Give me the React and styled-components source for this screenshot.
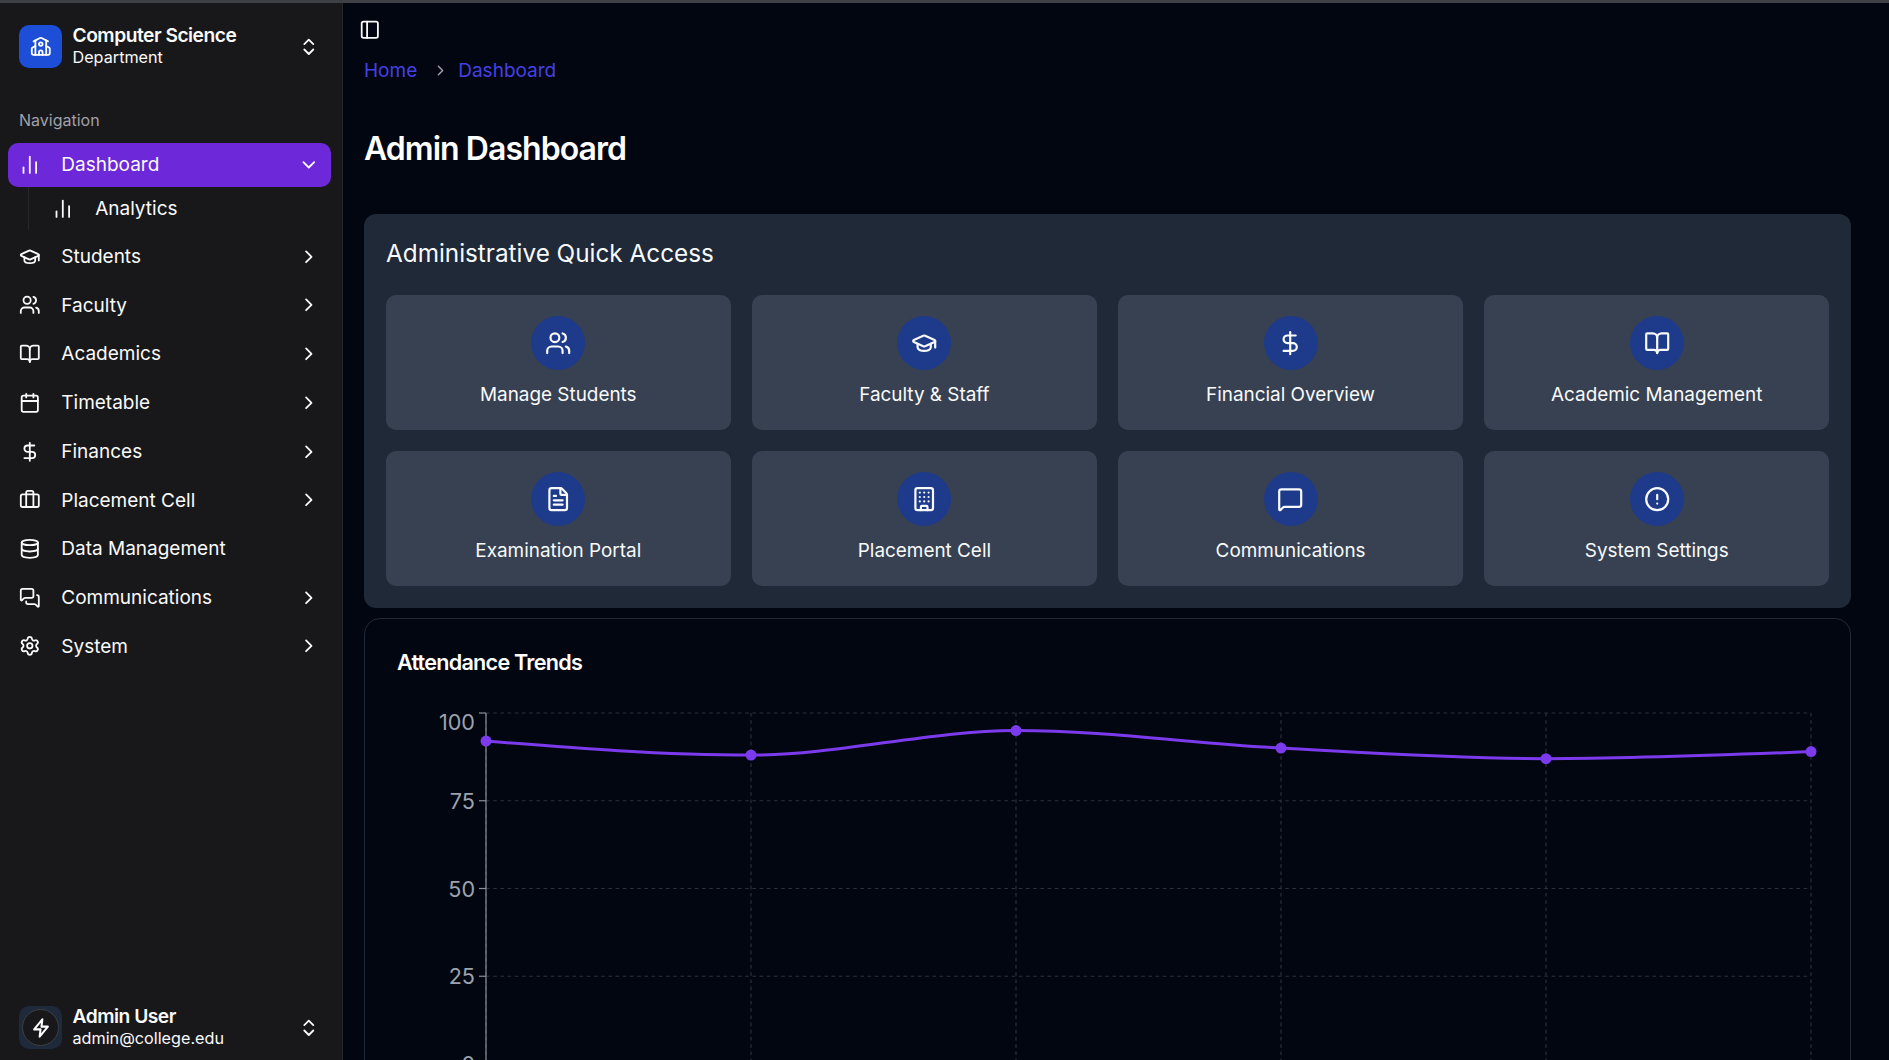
// Libraries
import React from "react";
import styled, { createGlobalStyle } from "styled-components";
import {
    BookOpen,
    Briefcase,
    Building,
    Calendar,
    ChartNoAxesColumn,
    ChevronDown,
    ChevronRight,
    ChevronsUpDown,
    CircleAlert,
    Database,
    DollarSign,
    FileText,
    GraduationCap,
    MessageSquare,
    MessagesSquare,
    PanelLeft,
    School,
    Settings,
    Users,
} from "lucide-react";

// Data
const NAV_ITEMS = [
    { label: "Students", icon: GraduationCap, more: true },
    { label: "Faculty", icon: Users, more: true },
    { label: "Academics", icon: BookOpen, more: true },
    { label: "Timetable", icon: Calendar, more: true },
    { label: "Finances", icon: DollarSign, more: true },
    { label: "Placement Cell", icon: Briefcase, more: true },
    { label: "Data Management", icon: Database },
    { label: "Communications", icon: MessagesSquare, more: true },
    { label: "System", icon: Settings, more: true },
];

const QUICK_LINKS = [
    { label: "Manage Students", icon: Users },
    { label: "Faculty & Staff", icon: GraduationCap },
    { label: "Financial Overview", icon: DollarSign },
    { label: "Academic Management", icon: BookOpen },
    { label: "Examination Portal", icon: FileText },
    { label: "Placement Cell", icon: Building },
    { label: "Communications", icon: MessageSquare },
    { label: "System Settings", icon: CircleAlert },
];

const ATTENDANCE = [92, 88, 95, 90, 87, 89];
const CHART = { left: 89, right: 1414, top: 13, bottom: 364, height: 460 };
const TICKS = [0, 25, 50, 75, 100];
const ICON = 21.6;

const xAt = (i) => CHART.left + (i * (CHART.right - CHART.left)) / (ATTENDANCE.length - 1);
const yAt = (v) => CHART.bottom - ((CHART.bottom - CHART.top) * v) / 100;

// same curve as a monotone-x line chart
const monotonePath = (pts) => {
    const h = pts.slice(1).map((p, i) => p.x - pts[i].x);
    const s = pts.slice(1).map((p, i) => (p.y - pts[i].y) / h[i]);
    const t = pts.map((p, i) => {
        if (i === 0 || i === pts.length - 1) return null;
        const sign = (Math.sign(s[i - 1]) + Math.sign(s[i])) / 2 || 0;
        const mid = (s[i - 1] * h[i] + s[i] * h[i - 1]) / (h[i - 1] + h[i]);
        return sign * Math.min(Math.abs(s[i - 1]), Math.abs(s[i]), 0.5 * Math.abs(mid)) * 2 || 0;
    });
    const last = pts.length - 1;
    t[0] = (3 * s[0] - t[1]) / 2;
    t[last] = (3 * s[last - 1] - t[last - 1]) / 2;
    let d = `M${pts[0].x},${pts[0].y}`;
    for (let i = 0; i < last; i++) {
        const dx = h[i] / 3;
        d += `C${pts[i].x + dx},${pts[i].y + dx * t[i]},${pts[i + 1].x - dx},${pts[i + 1].y - dx * t[i + 1]},${pts[i + 1].x},${pts[i + 1].y}`;
    }
    return d;
};

// Styled
const GlobalStyle = createGlobalStyle`
    * {
        box-sizing: border-box;
    }
    html,
    body {
        margin: 0;
        height: 100%;
        overflow: hidden;
        background: #020611;
    }
    body {
        font-family: Inter, "Noto Sans", sans-serif;
        color: #fafafa;
    }
`;

const Page = styled.div`
    height: 100vh;
    display: flex;
    flex-direction: column;
    overflow: hidden;
`;

const TopStrip = styled.div`
    height: 3px;
    flex: none;
    background: #3f3f46;
`;

const Shell = styled.div`
    flex: 1;
    min-height: 0;
    display: flex;
`;

const Sidebar = styled.aside`
    width: 343px;
    flex: none;
    display: flex;
    flex-direction: column;
    background: #18181b;
    border-right: 1px solid #27272a;
`;

const SwitcherRow = styled.div`
    height: 43px;
    display: flex;
    align-items: center;
    gap: 10.5px;
    padding: 0 22px 0 19px;
    margin-top: ${(p) => (p.$pushed ? "auto" : `${p.$top || 0}px`)};
    margin-bottom: ${(p) => p.$bottom || 0}px;
`;

const LogoBox = styled.div`
    width: 43px;
    height: 43px;
    flex: none;
    display: flex;
    align-items: center;
    justify-content: center;
    border-radius: 10px;
    color: #fff;
    background: ${(p) => p.$bg};
`;

const AvatarRing = styled.div`
    width: 37px;
    height: 37px;
    display: flex;
    align-items: center;
    justify-content: center;
    border-radius: 50%;
    border: 1px solid #3f3f46;
    background: #18181b;
`;

const SwitcherText = styled.div`
    flex: 1;
    min-width: 0;
    display: flex;
    flex-direction: column;
    gap: 1px;
    margin-bottom: 2px;
`;

const SwitcherTitle = styled.div`
    font-size: 19.2px;
    line-height: 22px;
    font-weight: 600;
    letter-spacing: -0.025em;
`;

const SwitcherSub = styled.div`
    font-size: 16.2px;
    line-height: 20px;
`;

const GroupLabel = styled.div`
    padding: 0 19px;
    margin-top: 41.4px;
    margin-bottom: 11.5px;
    font-size: 16px;
    line-height: 22px;
    color: #a1a1aa;
`;

const NavList = styled.nav`
    display: flex;
    flex-direction: column;
    gap: 4.7px;
    padding: 0 11px 0 8px;
`;

const NavRow = styled.div`
    height: 44px;
    display: flex;
    align-items: center;
    gap: 21.2px;
    padding: 0 11.5px 0 10.5px;
    border-radius: 10px;
    font-size: 19px;
    background: ${(p) => (p.$active ? "#6d28d9" : "transparent")};
`;

const NavLabel = styled.span`
    flex: 1;
`;

const SubList = styled.div`
    margin: 0 0 0 20px;
    height: 43px;
    padding-left: 23.4px;
    display: flex;
    align-items: flex-start;
    font-size: 19px;
    border-left: 1px solid #27272a;
`;

const SubRow = styled.div`
    height: 44px;
    display: flex;
    align-items: center;
    gap: 21.2px;
`;

const Main = styled.main`
    flex: 1;
    min-width: 0;
    overflow: hidden;
    background: #020611;
`;

const TopBar = styled.header`
    height: 37px;
    padding: 16px 0 0 16px;
    line-height: 0;
`;

const Content = styled.div`
    padding: 0 38px 0 21px;
`;

const Breadcrumb = styled.div`
    display: flex;
    align-items: center;
    margin-top: 17.5px;
    height: 26px;
    font-size: 19px;
    color: #4540e6;
`;

const CrumbSeparator = styled.span`
    display: flex;
    margin: 0 9px 0 15px;
    color: #a1a1aa;
`;

const PageTitle = styled.h1`
    margin: 43.5px 0 0;
    font-size: 32px;
    line-height: 44px;
    font-weight: 600;
    letter-spacing: -0.03em;
    color: #fff;
`;

const QuickPanel = styled.section`
    margin-top: 43px;
    padding: 22px;
    background: #1f2937;
    border-radius: 12px;
`;

const PanelTitle = styled.h2`
    margin: 0 0 21px;
    height: 38px;
    line-height: 34px;
    font-size: 24.3px;
    font-weight: 400;
    color: #f9fafb;
`;

const QuickGrid = styled.div`
    display: grid;
    grid-template-columns: repeat(4, 1fr);
    gap: 21px 21.6px;
`;

const QuickCard = styled.div`
    height: 135px;
    padding-top: 21px;
    display: flex;
    flex-direction: column;
    align-items: center;
    background: #374151;
    border-radius: 10px;
`;

const IconCircle = styled.div`
    width: 54px;
    height: 54px;
    display: flex;
    align-items: center;
    justify-content: center;
    border-radius: 50%;
    background: #1e3a8a;
    color: #f8fafc;
`;

const QuickLabel = styled.div`
    margin-top: 13px;
    line-height: 24px;
    font-size: 18.9px;
    font-weight: 400;
    color: #f9fafb;
`;

const ChartCard = styled.section`
    margin-top: 10px;
    padding: 29px 0 0 32px;
    border: 1px solid #1f2937;
    border-radius: 16px;
`;

const ChartTitle = styled.h3`
    margin: 0 0 24px;
    line-height: 28px;
    font-size: 21.6px;
    font-weight: 600;
    letter-spacing: -0.035em;
    color: #fff;
`;

const ChartSvg = styled.svg`
    display: block;
    overflow: visible;
`;

const TickLabel = styled.text`
    font-family: Inter, sans-serif;
    font-size: 21.6px;
    fill: #9ca3af;
`;

// Components
const BoltGlyph = () => (
    <svg width="22" height="22" viewBox="0 0 24 24" fill="none" stroke="currentColor" strokeWidth="2.2" strokeLinejoin="round">
        <path d="M13.5 2.5 4.5 13.5h7l-1 8 9-11h-7z" />
    </svg>
);

const AttendanceChart = () => {
    const points = ATTENDANCE.map((v, i) => ({ x: xAt(i), y: yAt(v) }));

    return (
        <ChartSvg width={CHART.right + 20} height={CHART.height}>
            <g stroke="#2b303b" strokeWidth="1.2" strokeDasharray="3.6 3.6" fill="none">
                {TICKS.slice(1).map((t) => (
                    <line key={t} x1={CHART.left} x2={CHART.right} y1={yAt(t)} y2={yAt(t)} />
                ))}
                {ATTENDANCE.map((_, i) => (
                    <line key={i} x1={xAt(i)} x2={xAt(i)} y1={CHART.top} y2={CHART.bottom} />
                ))}
            </g>
            <line x1={CHART.left} x2={CHART.left} y1={CHART.top} y2={CHART.bottom} stroke="#8b8f98" strokeWidth="1.2" />
            {TICKS.map((t) => (
                <g key={t}>
                    <line x1={CHART.left - 7} x2={CHART.left} y1={yAt(t)} y2={yAt(t)} stroke="#8b8f98" strokeWidth="1.2" />
                    <TickLabel
                        x={CHART.left - 11}
                        y={yAt(t) + (t === 100 ? 17 : 8)}
                        textAnchor="end"
                    >
                        {t}
                    </TickLabel>
                </g>
            ))}
            <path d={monotonePath(points)} fill="none" stroke="#7c3aed" strokeWidth="3" />
            {points.map((p, i) => (
                <circle key={i} cx={p.x} cy={p.y} r="5.5" fill="#7c3aed" />
            ))}
        </ChartSvg>
    );
};

const App = () => (
    <Page>
        <GlobalStyle />
        <TopStrip />
        <Shell>
            <Sidebar>
                <SwitcherRow $top={22}>
                    <LogoBox $bg="#1d4ed8">
                        <School size={ICON} />
                    </LogoBox>
                    <SwitcherText>
                        <SwitcherTitle>Computer Science</SwitcherTitle>
                        <SwitcherSub>Department</SwitcherSub>
                    </SwitcherText>
                    <ChevronsUpDown size={ICON} />
                </SwitcherRow>
                <GroupLabel>Navigation</GroupLabel>
                <NavList>
                    <div>
                        <NavRow $active>
                            <ChartNoAxesColumn size={ICON} />
                            <NavLabel>Dashboard</NavLabel>
                            <ChevronDown size={ICON} />
                        </NavRow>
                        <SubList>
                            <SubRow>
                                <ChartNoAxesColumn size={ICON} />
                                <span>Analytics</span>
                            </SubRow>
                        </SubList>
                    </div>
                    {NAV_ITEMS.map(({ label, icon: Icon, more }) => (
                        <NavRow key={label}>
                            <Icon size={ICON} />
                            <NavLabel>{label}</NavLabel>
                            {more && <ChevronRight size={ICON} />}
                        </NavRow>
                    ))}
                </NavList>
                <SwitcherRow $pushed $bottom={11}>
                    <LogoBox $bg="#1e293b">
                        <AvatarRing>
                            <BoltGlyph />
                        </AvatarRing>
                    </LogoBox>
                    <SwitcherText>
                        <SwitcherTitle>Admin User</SwitcherTitle>
                        <SwitcherSub>admin@college.edu</SwitcherSub>
                    </SwitcherText>
                    <ChevronsUpDown size={ICON} />
                </SwitcherRow>
            </Sidebar>
            <Main>
                <TopBar>
                    <PanelLeft size={ICON} />
                </TopBar>
                <Content>
                    <Breadcrumb>
                        <span>Home</span>
                        <CrumbSeparator>
                            <ChevronRight size={17} />
                        </CrumbSeparator>
                        <span>Dashboard</span>
                    </Breadcrumb>
                    <PageTitle>Admin Dashboard</PageTitle>
                    <QuickPanel>
                        <PanelTitle>Administrative Quick Access</PanelTitle>
                        <QuickGrid>
                            {QUICK_LINKS.map(({ label, icon: Icon }) => (
                                <QuickCard key={label}>
                                    <IconCircle>
                                        <Icon size={26.4} />
                                    </IconCircle>
                                    <QuickLabel>{label}</QuickLabel>
                                </QuickCard>
                            ))}
                        </QuickGrid>
                    </QuickPanel>
                    <ChartCard>
                        <ChartTitle>Attendance Trends</ChartTitle>
                        <AttendanceChart />
                    </ChartCard>
                </Content>
            </Main>
        </Shell>
    </Page>
);

export default App;
